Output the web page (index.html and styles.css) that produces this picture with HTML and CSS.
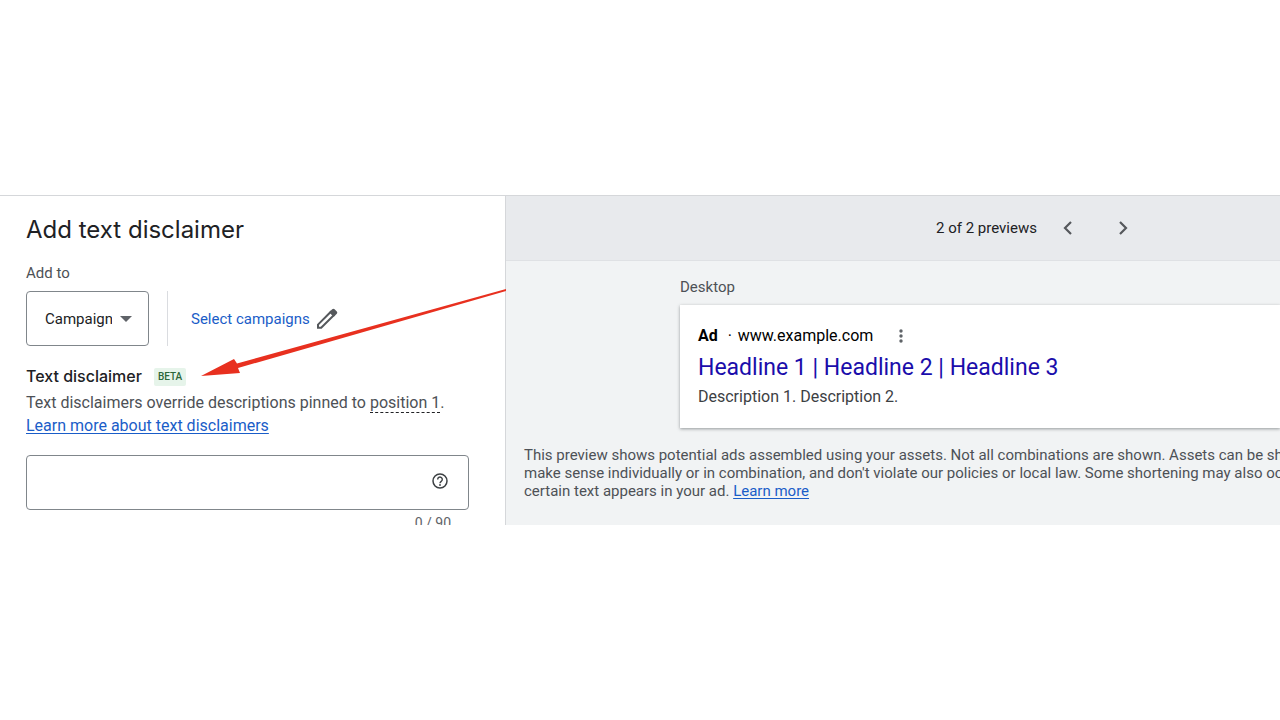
FILE: index.html
```html
<!DOCTYPE html>
<html lang="en">
<head>
    <meta charset="UTF-8">
    <meta name="viewport" content="width=device-width, initial-scale=1.0">
    <title>Add text disclaimer</title>
    <link rel="stylesheet" href="styles.css">
</head>
<body>
    <main class="editor">
        <section class="form-panel">
            <h1>Add text disclaimer</h1>

            <label class="add-label" for="level">Add to</label>
            <div class="add-row">
                <div class="select-box">
                    <select id="level" name="level">
                        <option>Campaign</option>
                        <option>Account</option>
                    </select>
                    <svg class="caret" width="12" height="6" viewBox="0 0 12 6"><path d="M0 0h12L6 6z" fill="#5f6368"/></svg>
                </div>
                <button type="button" class="select-campaigns">
                    Select campaigns
                    <svg width="22" height="22" viewBox="0 0 22 22">
                        <path d="M2 16.600L14.600 4l3.200 3.200L5.200 19.800H2z" fill="none" stroke="#55585c" stroke-width="2"/>
                        <path d="M13.200 4.200l3-3q1.200-1 2.400 0l2.200 2.200q1 1.200 0 2.400l-3 3z" fill="#55585c"/>
                    </svg>
                </button>
            </div>

            <div class="heading-row">
                <h2><label for="disclaimer">Text disclaimer</label></h2>
                <span class="badge">BETA</span>
            </div>
            <p class="hint">Text disclaimers override descriptions pinned to <span class="term">position 1</span>.<br>
                <a href="#">Learn more about text disclaimers</a></p>

            <div class="text-box">
                <input type="text" id="disclaimer" name="disclaimer" maxlength="90">
                <button type="button" class="help" aria-label="Help">
                    <svg width="16" height="16" viewBox="0 0 16 16" fill="none" stroke="#3c4043">
                        <circle cx="8" cy="8" r="7" stroke-width="1.500"/>
                        <path d="M5.700 6.400a2.300 2.300 0 1 1 3.700 1.800C8.500 8.900 8 9.200 8 10.200" stroke-width="1.400"/>
                        <circle cx="8" cy="12" r=".9" fill="#3c4043" stroke="none"/>
                    </svg>
                </button>
            </div>
            <div class="counter">0 / 90</div>
        </section>

        <section class="preview-panel">
            <div class="preview-bar">
                <span>2 of 2 previews</span>
                <button type="button" aria-label="Previous preview">
                    <svg width="10" height="14" viewBox="0 0 10 14"><path d="M8 1L2 7l6 6" fill="none" stroke="#55585c" stroke-width="2.200"/></svg>
                </button>
                <button type="button" aria-label="Next preview">
                    <svg width="10" height="14" viewBox="0 0 10 14"><path d="M2 1l6 6-6 6" fill="none" stroke="#55585c" stroke-width="2.200"/></svg>
                </button>
            </div>

            <div class="device">
                <div class="device-name">Desktop</div>
                <article class="ad">
                    <div class="ad-url">
                        <b>Ad</b><span class="dot">·</span><span>www.example.com</span>
                        <button type="button" aria-label="More options">
                            <svg width="4" height="14" viewBox="0 0 4 14" fill="#5f6368"><circle cx="2" cy="2" r="1.700"/><circle cx="2" cy="7" r="1.700"/><circle cx="2" cy="12" r="1.700"/></svg>
                        </button>
                    </div>
                    <a class="ad-title" href="#">Headline 1 | Headline 2 | Headline 3</a>
                    <p>Description 1. Description 2.</p>
                </article>
            </div>

            <p class="note">This preview shows potential ads assembled using your assets. Not all combinations are shown. Assets can be shown<br>
                make sense individually or in combination, and don't violate our policies or local law. Some shortening may also occur<br>
                certain text appears in your ad. <a href="#">Learn more</a></p>
        </section>

        <svg class="pointer" width="306" height="90" viewBox="0 0 306 90">
            <path d="M0 88L33 71l3 4.500L305 1v2L37 80l2 5z" fill="#e8301f"/>
        </svg>
    </main>
</body>
</html>
```

FILE: styles.css
```css
* {
    box-sizing: border-box;
}
body {
    margin: 0;
    min-height: 100vh;
    display: flex;
    align-items: center;
    background: white;
    font-family: Roboto, Arial, sans-serif;
    font-size: 15px;
    line-height: 18px;
    color: #202124;
}
h1, h2, p {
    margin: 0;
}
button {
    display: flex;
    align-items: center;
    padding: 0;
    border: none;
    background: none;
    font: inherit;
    color: inherit;
    cursor: pointer;
}
a {
    color: #1a5dc8;
    text-underline-offset: 2px;
}
.editor {
    position: relative;
    display: grid;
    grid-template-columns: 505fr 775fr;
    width: 100%;
    max-height: 330px;
    overflow: hidden;
    border-top: 1px solid #d5d7da;
}

/* left side */
.form-panel {
    min-width: 0;
    padding: 18px 36px 0 26px;
}
h1 {
    font-family: Inter, sans-serif;
    font-size: 24px;
    font-weight: 400;
    line-height: 32px;
}
.add-label {
    display: block;
    margin: 18px 0 9px;
    color: #4d5156;
}
.add-row {
    display: flex;
    gap: 18px;
}
.select-box {
    position: relative;
}
select {
    appearance: none;
    width: 123px;
    height: 55px;
    padding: 0 36px 0 18px;
    border: 1px solid #80868b;
    border-radius: 4px;
    background: white;
    font: inherit;
    color: inherit;
}
.caret {
    position: absolute;
    right: 17px;
    top: 25px;
    pointer-events: none;
}
.select-campaigns {
    gap: 6px;
    padding-left: 23px;
    border-left: 1px solid #dadce0;
    color: #1a5dc8;
}
.heading-row {
    display: flex;
    align-items: center;
    gap: 12px;
    margin-top: 20px;
}
h2 {
    font-family: Inter, sans-serif;
    font-size: 16px;
    font-weight: 500;
    line-height: 20px;
}
.badge {
    margin-top: 2px;
    padding: 0 4px;
    border-radius: 2px;
    background: #e6f4ea;
    color: #2b6638;
    font-size: 10px;
    font-weight: 500;
}
.hint {
    margin-top: 5px;
    font-size: 16px;
    line-height: 23px;
    color: #4d5156;
    white-space: nowrap;
}
.term {
    border-bottom: 1px dashed #202124;
}
.text-box {
    display: flex;
    align-items: center;
    height: 55px;
    margin-top: 18px;
    padding: 0 20px 3px 0;
    border: 1px solid #80868b;
    border-radius: 4px;
}
.text-box input {
    flex: 1;
    min-width: 0;
    height: 100%;
    padding: 0 18px;
    border: none;
    outline: none;
    background: none;
    font: inherit;
}
.counter {
    margin: 4px 18px 0 0;
    font-size: 14px;
    text-align: right;
    color: #5f6368;
}

/* right side */
.preview-panel {
    min-width: 0;
    overflow: hidden;
    border-left: 1px solid #d5d7da;
    background: #f1f3f4;
}
.preview-bar {
    display: flex;
    align-items: center;
    height: 65px;
    padding-left: 430px;
    border-bottom: 1px solid #dfe1e4;
    background: #e8eaed;
}
.preview-bar button {
    justify-content: center;
    width: 55px;
    height: 40px;
}
.preview-bar span {
    margin-right: 4px;
}
.device {
    margin: 17px 0 0 174px;
}
.device-name {
    color: #4d5156;
}
.ad {
    margin-top: 9px;
    padding: 21px 18px 22px;
    background: white;
    box-shadow: 0 1px 3px rgba(60, 64, 67, 0.5);
}
.ad-url {
    display: flex;
    align-items: center;
    font-size: 16px;
    line-height: 20px;
    color: black;
}
.dot {
    width: 20px;
    padding-left: 4px;
    text-align: center;
}
.ad-url button {
    margin-left: 26px;
}
.ad-title {
    display: block;
    margin: 7px 0 5px;
    font-size: 23px;
    line-height: 30px;
    color: #1a0dab;
    text-decoration: none;
    white-space: nowrap;
}
.ad p {
    font-size: 16px;
    color: #3c4043;
}
.note {
    margin: 18px 0 0 18px;
    color: #4d5156;
    white-space: nowrap;
}

/* red arrow lies over the form */
.pointer {
    position: absolute;
    left: 201px;
    top: 92px;
    pointer-events: none;
}
```
